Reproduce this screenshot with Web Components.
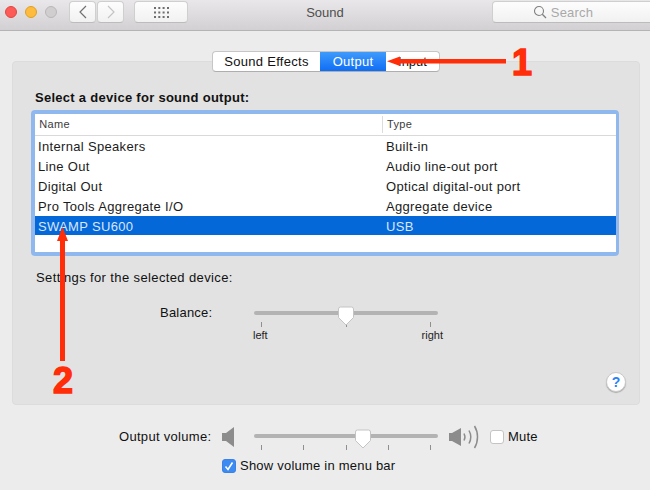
<!DOCTYPE html>
<html>
<head>
<meta charset="utf-8">
<title>Sound</title>
<style>
html, body { margin: 0; padding: 0; }
body {
  width: 650px; height: 490px; overflow: hidden; position: relative;
  background: #ececec; color: #1a1a1a;
  font: 13px "Liberation Sans", Arial, sans-serif;
}
</style>
</head>
<body>
<sys-toolbar title-text="Sound"></sys-toolbar>
<seg-tabs></seg-tabs>
<sound-panel>
  <device-table slot="table"></device-table>
  <balance-row slot="balance"></balance-row>
</sound-panel>
<volume-row></volume-row>
<call-outs></call-outs>

<script>
class SysToolbar extends HTMLElement {
  constructor () {
    super()
    this.attachShadow({ mode: 'open' })
    this.shadowRoot.innerHTML = `
<style>
:host{display:flex;align-items:flex-start;height:30px;border-bottom:1px solid #b4b4b4;background:linear-gradient(#e9e7e9,#d2d0d2);box-sizing:content-box;position:relative;overflow:hidden}
.lights{display:flex;gap:8px;margin:6px 0 0 5px}
.lights i{width:12px;height:12px;border-radius:50%;box-sizing:border-box;display:block}
.r{background:#fc5b57;border:1px solid #e2463f}
.y{background:#fdbc40;border:1px solid #dfa023}
.g{background:#d0cecf;border:1px solid #b9b7b8}
.btn{height:22px;background:linear-gradient(#fdfdfd,#f1f1f1);border:1px solid #cfcfcf;border-bottom-color:#bcbcbc;border-radius:4px;box-sizing:border-box;display:flex;align-items:center;justify-content:center}
.nav{display:flex;gap:1px;margin:1px 0 0 12px}
.nav .btn{width:27px}
.grid{width:54px;margin:1px 0 0 10px}
.title{position:absolute;left:0;right:0;top:5px;text-align:center;color:#4e4e4e;font-size:13px;line-height:16px}
.search{position:absolute;left:492px;right:-6px;top:1px;gap:4px;padding-right:22px;color:#a9a9a9;font-size:13px;letter-spacing:.2px}
</style>
<div class="lights"><i class="r"></i><i class="y"></i><i class="g"></i></div>
<div class="nav">
  <div class="btn"><svg width="10" height="14" viewBox="0 0 10 14"><path d="M8 1 2 7l6 6" fill="none" stroke="#707070" stroke-width="1.200"/></svg></div>
  <div class="btn"><svg width="10" height="14" viewBox="0 0 10 14"><path d="M2 1l6 6-6 6" fill="none" stroke="#c4c4c4" stroke-width="1.200"/></svg></div>
</div>
<div class="btn grid"><svg width="15" height="11" viewBox="0 0 15 11" fill="#6e6e6e"><path d="M0 0h2v2H0zM4.300 0h2v2h-2zM8.600 0h2v2h-2zM13 0h2v2h-2zM0 4.500h2v2H0zM4.300 4.500h2v2h-2zM8.600 4.500h2v2h-2zM13 4.500h2v2h-2zM0 9h2v2H0zM4.300 9h2v2h-2zM8.600 9h2v2h-2zM13 9h2v2h-2z"/></svg></div>
<div class="title">${this.getAttribute('title-text')}</div>
<div class="btn search"><svg width="14" height="14" viewBox="0 0 14 14"><circle cx="6" cy="6" r="4.500" fill="none" stroke="#808080" stroke-width="1.100"/><path d="M9.300 9.300 13 13" stroke="#808080" stroke-width="1.300"/></svg><span>Search</span></div>
`
  }
}

class SegTabs extends HTMLElement {
  constructor () {
    super()
    this.attachShadow({ mode: 'open' })
    this.shadowRoot.innerHTML = `
<style>
:host{display:flex;position:relative;z-index:2;width:228px;height:21px;margin:20px 0 -11px 212px;background:#fff;border:1px solid #c6c6c6;border-bottom-color:#aeaeae;border-radius:4px;overflow:hidden;box-sizing:border-box;font-size:13px;line-height:19px;text-align:center;color:#111}
span{display:block}
.a{width:107px;letter-spacing:.3px}
.b{width:66px;color:#fff;background:linear-gradient(#3f9bfb,#0f6df5);letter-spacing:.25px}
.c{flex:1}
</style>
<span class="a">Sound Effects</span><span class="b">Output</span><span class="c">Input</span>
`
  }
}

class SoundPanel extends HTMLElement {
  constructor () {
    super()
    this.attachShadow({ mode: 'open' })
    this.shadowRoot.innerHTML = `
<style>
:host{display:block;position:relative;margin:0 10px 0 12px;height:344px;box-sizing:border-box;background:#e2e2e2;border:1px solid #dcdcdc;border-radius:4px;padding:28px 0 0 22px;color:#111}
.head{font-weight:bold;font-size:13px;line-height:16px;letter-spacing:.28px;height:20px}
.sub{margin:14px 0 0 1px;line-height:16px;letter-spacing:.38px;height:16px}
.help{position:absolute;right:13px;top:310px;width:20px;height:20px;border-radius:50%;background:#fff;border:1px solid #c9c9c9;box-shadow:0 1px 1px #aaa;box-sizing:border-box;text-align:center;line-height:18px;font-size:14px;color:#2a83f6;font-weight:bold}
</style>
<div class="head">Select a device for sound output:</div>
<slot name="table"></slot>
<div class="sub">Settings for the selected device:</div>
<slot name="balance"></slot>
<div class="help">?</div>
`
  }
}

class DeviceTable extends HTMLElement {
  constructor () {
    super()
    this.attachShadow({ mode: 'open' })
    const rows = [
      ['Internal Speakers', 'Built-in'],
      ['Line Out', 'Audio line-out port'],
      ['Digital Out', 'Optical digital-out port'],
      ['Pro Tools Aggregate I/O', 'Aggregate device'],
      ['SWAMP SU600', 'USB']
    ]
    const rowHtml = rows.map(function (r, i) {
      return `<div class="row${i === 4 ? ' sel' : ''}"><span class="n">${r[0]}</span><span class="t">${r[1]}</span></div>`
    }).join('')
    this.shadowRoot.innerHTML = `
<style>
:host{display:block;width:588px;height:146px;box-sizing:border-box;margin-left:-4px;background:#fff;border:4px solid #8fb9ee;border-right-width:3px;border-radius:4px;overflow:hidden;color:#1c1c1c}
.hd{display:flex;height:22px;border-bottom:1px solid #d9d9d9;box-sizing:border-box;font-size:11px;line-height:21px;color:#3c3c3c}
.hd .n{width:346px;padding-left:1px;letter-spacing:.3px}
.hd .t{border-left:1px solid #dcdcdc;margin:2px 0;line-height:17px;padding-left:4px;letter-spacing:.3px}
.row{display:flex;height:20px;line-height:22px;font-size:13px;letter-spacing:.33px}
.row .n{width:348px;padding-left:3px}
.sel{background:#0468d8;color:#d9e6fb;height:19px;line-height:21px}
</style>
<div class="hd"><span class="n">&nbsp;Name</span><span class="t">Type</span></div>
<div class="rows">${rowHtml}</div>
`
  }
}

// track with ticks, thumb sits over the track
class MacSlider extends HTMLElement {
  constructor () {
    super()
    this.attachShadow({ mode: 'open' })
    const ticks = Number(this.getAttribute('ticks'))
    const at = this.getAttribute('at')
    let tickHtml = ''
    for (let i = 0; i < ticks; i++) tickHtml += '<i></i>'
    this.shadowRoot.innerHTML = `
<style>
:host{display:block;position:relative;width:184px;height:24px}
.track{height:4px;margin-top:2px;background:#b3b3b3;border-radius:2px}
.ticks{display:flex;justify-content:space-between;margin:7px 7px 0 7px}
.ticks i{display:block;width:1px;height:5px;background:#8f8f8f}
svg{position:absolute;top:-5px;left:${at}px}
</style>
<div class="track"></div>
<div class="ticks">${tickHtml}</div>
<svg width="18" height="21" viewBox="0 0 18 21"><path d="M1.500 3a2 2 0 0 1 2-2h11a2 2 0 0 1 2 2v8.500l-7.500 7.500-7.500-7.500z" fill="#fff" stroke="#c4c4c4"/></svg>
`
  }
}

class BalanceRow extends HTMLElement {
  constructor () {
    super()
    this.attachShadow({ mode: 'open' })
    this.shadowRoot.innerHTML = `
<style>
:host{display:flex;margin:19px 0 0 125px;height:50px;color:#111}
.lab{width:94px;line-height:16px;letter-spacing:.22px}
.col{width:184px;padding-top:4px}
.ends{display:flex;justify-content:space-between;font-size:11px;line-height:13px;margin:-6px -5px 0 -1px;color:#222;width:190px}
</style>
<div class="lab">Balance:</div>
<div class="col">
  <mac-slider ticks="3" at="83"></mac-slider>
  <div class="ends"><span>left</span><span>right</span></div>
</div>
`
  }
}

class MacCheck extends HTMLElement {
  constructor () {
    super()
    this.attachShadow({ mode: 'open' })
    const on = this.hasAttribute('checked')
    this.shadowRoot.innerHTML = `
<style>
:host{display:inline-flex;align-items:center;gap:4px;letter-spacing:.22px;color:#111}
b{display:flex;align-items:center;justify-content:center;width:14px;height:14px;border-radius:3px;box-sizing:border-box;background:${on ? '#3b8bf3' : '#fff'};border:1px solid ${on ? '#3b82e4' : '#c4c4c4'}}
</style>
<b>${on ? '<svg width="10" height="10" viewBox="0 0 10 10"><path d="M1.500 5.500 4 8.500 8.500 1.500" fill="none" stroke="#fff" stroke-width="1.600"/></svg>' : ''}</b><span><slot></slot></span>
`
  }
}

class VolumeRow extends HTMLElement {
  constructor () {
    super()
    this.attachShadow({ mode: 'open' })
    this.shadowRoot.innerHTML = `
<style>
:host{display:block;padding:24px 0 0 119px;color:#111}
.top{display:flex;height:24px;line-height:16px}
.lab{width:103px;letter-spacing:.3px}
.spk{width:32px;margin-top:-2px}
.big{width:41px;margin:-4px 0 0 11px}
.sl{margin-top:3px;width:184px}
.show{margin:5px 0 0 103px}
</style>
<div class="top">
  <span class="lab">Output volume:</span>
  <span class="spk"><svg width="13" height="20" viewBox="0 0 13 20"><path d="M0 6h4l8-6v20l-8-6H0z" fill="#8c8c8c"/></svg></span>
  <span class="sl"><mac-slider ticks="5" at="100"></mac-slider></span>
  <span class="big"><svg width="32" height="24" viewBox="0 0 32 24" fill="none" stroke="#8c8c8c" stroke-width="1.500"><path d="M0 8h3l9-5v18l-9-5H0z" fill="#8c8c8c" stroke="none"/><path d="M15 8.500c1.200 2.200 1.200 4.800 0 7M20 5.500c2.200 4 2.200 9 0 13M25.500 1c4 6.500 4 15.500 0 22"/></svg></span>
  <mac-check style="height:16px">Mute</mac-check>
</div>
<div class="show"><mac-check checked>Show volume in menu bar</mac-check></div>
`
  }
}

// red annotations drawn on top of the screenshot
class CallOuts extends HTMLElement {
  constructor () {
    super()
    this.attachShadow({ mode: 'open' })
    this.shadowRoot.innerHTML = `
<style>
:host{position:absolute;left:0;top:0;z-index:5;width:650px;height:490px;pointer-events:none;color:#ff2d08;font:bold 36px "Liberation Sans",Arial,sans-serif;line-height:36px}
svg{position:absolute;left:0;top:0}
.one{position:absolute;left:512px;top:45px;-webkit-text-stroke:1.500px #ff2d08}
.two{position:absolute;left:53px;top:363px;-webkit-text-stroke:1.500px #ff2d08}
</style>
<svg width="650" height="490"><path d="M506 59h-106v-2.500l-13 4.700 13 4.700v-2.400h106z" fill="#ff2d08"/><path d="M60 361V241h-3l5.500-14 5.500 14h-3v120z" fill="#ff2d08"/></svg>
<span class="one">1</span><span class="two">2</span>
`
  }
}

customElements.define('mac-slider', MacSlider)
customElements.define('mac-check', MacCheck)
customElements.define('sys-toolbar', SysToolbar)
customElements.define('seg-tabs', SegTabs)
customElements.define('device-table', DeviceTable)
customElements.define('balance-row', BalanceRow)
customElements.define('sound-panel', SoundPanel)
customElements.define('volume-row', VolumeRow)
customElements.define('call-outs', CallOuts)
</script>
</body>
</html>
